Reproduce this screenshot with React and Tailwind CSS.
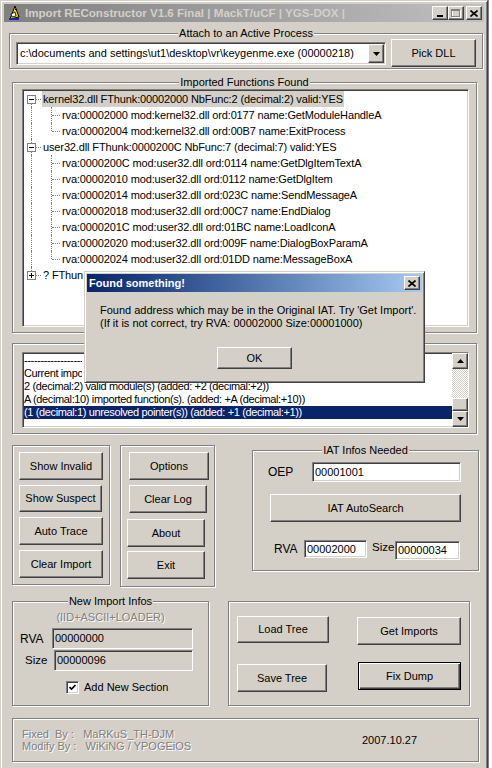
import React from "react";

const raised =
  "border border-t-white border-l-white border-r-[#404040] border-b-[#404040] shadow-[inset_-1px_-1px_0_#808080]";
const sunken =
  "border border-t-[#808080] border-l-[#808080] border-r-white border-b-white shadow-[inset_1px_1px_0_#404040,inset_-1px_-1px_0_#d4d0c8]";
const disabledText = "text-[#808080] [text-shadow:1px_1px_0_#ffffff]";

function Group({ title, className, children }) {
  return (
    <div className={`relative border border-[#808080] shadow-[inset_1px_1px_0_#fff,1px_1px_0_#fff] ${className}`}>
      {title && (
        <div className="absolute left-0 right-0 -top-[7px] flex justify-center">
          <span className="bg-[#d4d0c8] px-[1px] leading-[13px]">{title}</span>
        </div>
      )}
      {children}
    </div>
  );
}

function Btn({ children, className = "" }) {
  return (
    <div className={`flex items-center justify-center bg-[#d4d0c8] text-black ${raised} ${className}`}>
      {children}
    </div>
  );
}

function Field({ value, className = "", gray }) {
  return (
    <div className={`flex items-center pl-[2px] ${gray ? "bg-[#d4d0c8]" : "bg-white"} ${sunken} ${className}`}>
      {value}
    </div>
  );
}

function Arrow({ up }) {
  return (
    <svg width="7" height="4" viewBox="0 0 7 4">
      {up ? <path d="M3.5 0 L7 4 L0 4 Z" fill="#000" /> : <path d="M0 0 L7 0 L3.5 4 Z" fill="#000" />}
    </svg>
  );
}

const treeRows = [
  { l: 0, box: "-", t: "kernel32.dll FThunk:00002000 NbFunc:2 (decimal:2) valid:YES", sel: true, first: true },
  { l: 1, t: "rva:00002000 mod:kernel32.dll ord:0177 name:GetModuleHandleA" },
  { l: 1, t: "rva:00002004 mod:kernel32.dll ord:00B7 name:ExitProcess", last: true },
  { l: 0, box: "-", t: "user32.dll FThunk:0000200C NbFunc:7 (decimal:7) valid:YES" },
  { l: 1, t: "rva:0000200C mod:user32.dll ord:0114 name:GetDlgItemTextA" },
  { l: 1, t: "rva:00002010 mod:user32.dll ord:0112 name:GetDlgItem" },
  { l: 1, t: "rva:00002014 mod:user32.dll ord:023C name:SendMessageA" },
  { l: 1, t: "rva:00002018 mod:user32.dll ord:00C7 name:EndDialog" },
  { l: 1, t: "rva:0000201C mod:user32.dll ord:01BC name:LoadIconA" },
  { l: 1, t: "rva:00002020 mod:user32.dll ord:009F name:DialogBoxParamA" },
  { l: 1, t: "rva:00002024 mod:user32.dll ord:01DD name:MessageBoxA", last: true },
  { l: 0, box: "+", t: "? FThunk:00003000 NbFunc:1 (decimal:1) valid:NO", lastRoot: true },
];

function TreeRow({ row }) {
  return (
    <div className="relative h-[16px] leading-[16px] tracking-[-0.13px]">
      {row.l === 0 ? (
        <>
          <span
            className={`absolute left-[8px] w-0 border-l border-dotted border-[#808080] ${
              row.first ? "top-[8px] bottom-0" : row.lastRoot ? "top-0 h-[8px]" : "top-0 bottom-0"
            }`}
          />
          <span className="absolute left-[13px] top-[8px] w-[5px] h-0 border-t border-dotted border-[#808080]" />
          <span className="absolute left-[4px] top-[4px] w-[9px] h-[9px] bg-white border border-[#808080]">
            <span className="absolute left-[1px] top-[3px] w-[5px] h-[1px] bg-black" />
            {row.box === "+" && <span className="absolute left-[3px] top-[1px] w-[1px] h-[5px] bg-black" />}
          </span>
          <span
            className={`absolute left-[19px] top-0 px-[1px] whitespace-nowrap ${row.sel ? "bg-[#d4d0c8]" : ""} ${
              row.lastRoot ? "w-[41px] overflow-hidden" : ""
            }`}
          >
            {row.t}
          </span>
        </>
      ) : (
        <>
          <span className="absolute left-[8px] top-0 bottom-0 w-0 border-l border-dotted border-[#808080]" />
          <span
            className={`absolute left-[28px] w-0 border-l border-dotted border-[#808080] ${
              row.last ? "top-0 h-[8px]" : "top-0 bottom-0"
            }`}
          />
          <span className="absolute left-[29px] top-[8px] w-[8px] h-0 border-t border-dotted border-[#808080]" />
          <span className="absolute left-[39px] top-0 whitespace-nowrap">{row.t}</span>
        </>
      )}
    </div>
  );
}

function AppIcon() {
  return (
    <svg width="16" height="16" viewBox="0 0 16 16">
      <path d="M4 14 L9 1 L13 12 Z" fill="#f8d800" stroke="#000" strokeWidth="1" />
      <path d="M5 9 L9 7 L10 11 L6 12 Z" fill="#fff" stroke="#000" strokeWidth="0.8" />
      <rect x="3" y="13" width="10" height="2" fill="#1030a0" />
      <rect x="9" y="4" width="2" height="1" fill="#000" />
    </svg>
  );
}

function CapBtn({ children }) {
  return (
    <div className={`w-[16px] h-[14px] flex items-center justify-center bg-[#d4d0c8] ${raised}`}>{children}</div>
  );
}

export default function App() {
  return (
    <div className="relative w-[492px] h-[768px] overflow-hidden bg-white flex font-['Liberation_Sans',Arial,sans-serif] text-[11px] text-black">
      {/* main window */}
      <div className="w-[488px] h-[780px] shrink-0 bg-[#d4d0c8] border border-t-[#d4d0c8] border-l-[#d4d0c8] border-r-[#404040] border-b-[#404040] shadow-[inset_1px_1px_0_#fff,inset_-1px_-1px_0_#808080] p-[3px]">
        {/* title bar */}
        <div className="h-[18px] flex items-center bg-linear-to-r from-[#808080] to-[#c0c0c0] pl-[2px] pr-[2px]">
          <AppIcon />
          <span className="ml-[3px] font-bold text-[#d4d0c8] text-[11.6px] whitespace-nowrap">
            Import REConstructor V1.6 Final | MackT/uCF | YGS-DOX |
          </span>
          <div className="ml-auto flex items-center">
            <CapBtn>
              <svg width="8" height="8" viewBox="0 0 8 8">
                <rect x="1" y="6" width="6" height="2" fill="#000" />
              </svg>
            </CapBtn>
            <CapBtn>
              <svg width="10" height="9" viewBox="0 0 10 9">
                <rect x="1.5" y="1.5" width="8" height="7" fill="none" stroke="#fff" />
                <rect x="0.5" y="0.5" width="8" height="7" fill="none" stroke="#808080" />
                <rect x="0" y="0" width="9" height="2" fill="#808080" />
              </svg>
            </CapBtn>
            <div className="ml-[2px]">
              <CapBtn>
                <svg width="8" height="7" viewBox="0 0 8 7">
                  <path d="M0.5 0.5 L7.5 6.5 M7.5 0.5 L0.5 6.5" stroke="#000" strokeWidth="1.6" />
                </svg>
              </CapBtn>
            </div>
          </div>
        </div>

        {/* Attach group */}
        <Group title="Attach to an Active Process" className="ml-[5px] mt-[11px] w-[474px] h-[36px]">
          <div className="flex items-start pl-[6px] pt-[5px]">
            <div className={`mt-[3px] w-[370px] h-[23px] bg-white flex items-center ${sunken}`}>
              <span className="pl-[3px] flex-1 whitespace-nowrap">
                c:\documents and settings\ut1\desktop\vr\keygenme.exe (00000218)
              </span>
              <div className={`w-[16px] h-[19px] flex items-center justify-center bg-[#d4d0c8] mr-[1px] ${raised}`}>
                <Arrow />
              </div>
            </div>
            <Btn className="ml-[5px] w-[85px] h-[28px]">Pick DLL</Btn>
          </div>
        </Group>

        {/* Imported functions */}
        <Group title="Imported Functions Found" className="ml-[8px] mt-[13px] w-[465px] h-[251px]">
          <div className={`ml-[9px] mt-[6px] w-[447px] h-[238px] bg-white pt-[1px] overflow-hidden ${sunken}`}>
            {treeRows.map((r, i) => (
              <TreeRow key={i} row={r} />
            ))}
          </div>
        </Group>

        {/* Log */}
        <Group className="ml-[8px] mt-[10px] w-[465px] h-[91px]">
          <div className={`ml-[9px] mt-[8px] w-[447px] h-[76px] bg-white flex ${sunken}`}>
            <div className="flex-1 pl-[1px] pt-[1px] leading-[13px] text-[11px] tracking-[-0.37px] overflow-hidden whitespace-nowrap">
              <div className="w-[58px] overflow-hidden">--------------------------------------------</div>
              <div className="w-[58px] overflow-hidden">Current imports:</div>
              <div>2 (decimal:2) valid module(s) (added: +2 (decimal:+2))</div>
              <div>A (decimal:10) imported function(s). (added: +A (decimal:+10))</div>
              <div className="bg-[#0a246a] text-white">
                (1 (decimal:1) unresolved pointer(s)) (added: +1 (decimal:+1))
              </div>
            </div>
            <div className="w-[16px] flex flex-col">
              <div className={`h-[16px] flex items-center justify-center bg-[#d4d0c8] ${raised}`}>
                <Arrow up />
              </div>
              <div className="flex-1 bg-[repeating-conic-gradient(#d4d0c8_0%_25%,#ffffff_0%_50%)] [background-size:2px_2px]" />
              <div className={`h-[13px] bg-[#d4d0c8] ${raised}`} />
              <div className={`h-[16px] flex items-center justify-center bg-[#d4d0c8] ${raised}`}>
                <Arrow />
              </div>
            </div>
          </div>
        </Group>

        {/* Buttons row */}
        <div className="flex items-start mt-[11px]">
          <Group className="ml-[8px] w-[98px] h-[140px]">
            <div className="flex flex-col gap-[5px] pl-[6px] pt-[6px]">
              <Btn className="w-[84px] h-[28px]">Show Invalid</Btn>
              <Btn className="w-[83px] h-[27px]">Show Suspect</Btn>
              <Btn className="w-[84px] h-[28px]">Auto Trace</Btn>
              <Btn className="w-[84px] h-[28px]">Clear Import</Btn>
            </div>
          </Group>
          <Group className="ml-[10px] w-[95px] h-[142px]">
            <div className="flex flex-col pt-[6px]">
              <Btn className="ml-[8px] w-[80px] h-[28px]">Options</Btn>
              <Btn className="ml-[8px] mt-[5px] w-[78px] h-[28px]">Clear Log</Btn>
              <Btn className="ml-[6px] mt-[6px] w-[78px] h-[28px]">About</Btn>
              <Btn className="ml-[6px] mt-[4px] w-[78px] h-[28px]">Exit</Btn>
            </div>
          </Group>
          <Group title="IAT Infos Needed" className="ml-[37px] mt-[5px] w-[227px] h-[121px]">
            <div className="flex items-center mt-[11px] pl-[15px]">
              <span className="w-[44px] text-[12px]">OEP</span>
              <Field value="00001001" className="w-[149px] h-[20px]" />
            </div>
            <Btn className="ml-[17px] mt-[12px] w-[191px] h-[28px]">IAT AutoSearch</Btn>
            <div className="flex items-start mt-[18px] pl-[21px]">
              <span className="w-[30px] h-[18px] leading-[18px] text-[12px]">RVA</span>
              <Field value="00002000" className="w-[63px] h-[18px]" />
              <span className="ml-[5px] w-[23px] h-[16px] leading-[14px] text-[11.5px]">Size</span>
              <Field value="00000034" className="mt-[1px] w-[65px] h-[19px]" />
            </div>
          </Group>
        </div>

        {/* New import / tree buttons */}
        <div className="flex items-start mt-[14px]">
          <Group title="New Import Infos" className="ml-[8px] w-[197px] h-[105px]">
            <div className={`mt-[9px] text-center leading-[13px] ${disabledText}`}>(IID+ASCII+LOADER)</div>
            <div className="flex items-center mt-[4px] pl-[7px]">
              <span className="w-[32px] text-[12px]">RVA</span>
              <Field gray value="00000000" className="w-[141px] h-[21px]" />
            </div>
            <div className="flex items-center mt-[1px] pl-[12px]">
              <span className="w-[29px] text-[11.5px]">Size</span>
              <Field gray value="00000096" className="w-[139px] h-[21px]" />
            </div>
            <div className="flex items-center mt-[8px] pl-[53px]">
              <div className={`w-[13px] h-[13px] bg-white flex items-center justify-center ${sunken}`}>
                <svg width="7" height="7" viewBox="0 0 7 7">
                  <path d="M0.5 3 L2.5 5 L6.5 1" fill="none" stroke="#000" strokeWidth="1.6" />
                </svg>
              </div>
              <span className="ml-[5px]">Add New Section</span>
            </div>
          </Group>
          <Group className="ml-[19px] w-[242px] h-[105px]">
            <div className="flex items-start pl-[8px] pt-[14px]">
              <Btn className="w-[92px] h-[27px]">Load Tree</Btn>
              <Btn className="ml-[28px] mt-[1px] w-[104px] h-[28px]">Get Imports</Btn>
            </div>
            <div className="flex items-start pl-[8px] mt-[17px]">
              <Btn className="mt-[2px] w-[90px] h-[28px]">Save Tree</Btn>
              <div className="ml-[31px] w-[103px] h-[28px] flex items-center justify-center bg-[#d4d0c8] border border-black shadow-[inset_1px_1px_0_#fff,inset_-1px_-1px_0_#404040,inset_-2px_-2px_0_#808080]">
                Fix Dump
              </div>
            </div>
          </Group>
        </div>

        {/* Credits */}
        <Group className="ml-[8px] mt-[12px] w-[467px] h-[44px]">
          <div className="flex items-center h-full pl-[9px]">
            <div className={`w-[340px] leading-[12px] whitespace-pre ${disabledText}`}>
              <div>Fixed  By :   MaRKuS_TH-DJM</div>
              <div>Modify By :   WiKiNG / YPOGEiOS</div>
            </div>
            <span>2007.10.27</span>
          </div>
        </Group>
      </div>

      {/* strip of window behind */}
      <div className="flex-1 h-full bg-white border-l border-[#808080]" />

      {/* Dialog */}
      <div className="absolute left-[84px] top-[271px] w-[341px] h-[112px] bg-[#d4d0c8] border border-t-[#d4d0c8] border-l-[#d4d0c8] border-r-[#404040] border-b-[#404040] shadow-[inset_1px_1px_0_#fff,inset_-1px_-1px_0_#808080] p-[2px]">
        <div className="h-[18px] flex items-center bg-linear-to-r from-[#0a246a] to-[#a6caf0] pl-[2px] pr-[2px]">
          <span className="font-bold text-white text-[11px]">Found something!</span>
          <div className="ml-auto">
            <CapBtn>
              <svg width="8" height="7" viewBox="0 0 8 7">
                <path d="M0.5 0.5 L7.5 6.5 M7.5 0.5 L0.5 6.5" stroke="#000" strokeWidth="1.6" />
              </svg>
            </CapBtn>
          </div>
        </div>
        <div className="pl-[13px] mt-[12px] leading-[13px] whitespace-nowrap">
          <div>Found address which may be in the Original IAT. Try 'Get Import'.</div>
          <div>(If it is not correct, try RVA: 00002000 Size:00001000)</div>
        </div>
        <div className="flex justify-center mt-[17px]">
          <Btn className="w-[75px] h-[22px]">OK</Btn>
        </div>
      </div>
    </div>
  );
}
